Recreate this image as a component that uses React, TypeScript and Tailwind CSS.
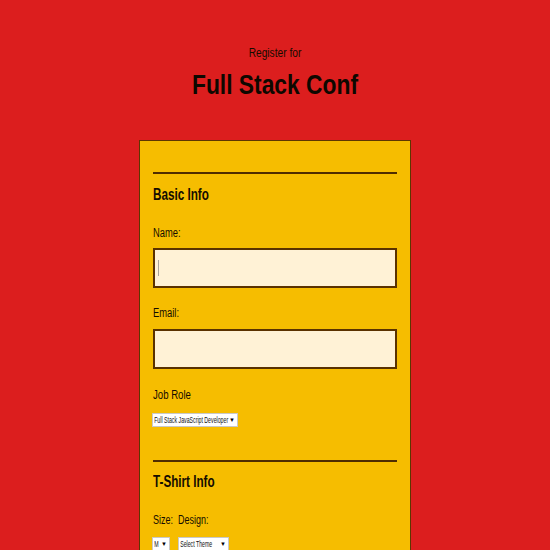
import { useState } from 'react';

const SIZES = ['M', 'S', 'L', 'XL'];

// native selects are drawn as a small white box; the real <select> sits on top, invisible
function MiniSelect({
    value,
    options,
    width,
    onChange,
}: {
    value: string;
    options: string[];
    width: string;
    onChange: (v: string) => void;
}) {
    return (
        <div className={`relative h-[14px] ${width} bg-white border border-[#c9c9c9] overflow-hidden`}>
            <span className="block whitespace-nowrap pl-[2px] text-[9px] leading-[12px] text-[#111] scale-x-[0.58] origin-left">
                {value}
            </span>
            <span className="pointer-events-none absolute right-[2px] top-0 text-[6px] leading-[12px] text-black">▼</span>
            <select
                value={value}
                onChange={(e) => onChange(e.target.value)}
                className="absolute inset-0 opacity-0 cursor-pointer"
            >
                {options.map((o) => (
                    <option key={o} value={o}>{o}</option>
                ))}
            </select>
        </div>
    );
}

export default function App() {
    const [name, setName] = useState('');
    const [email, setEmail] = useState('');
    const [role, setRole] = useState('Full Stack JavaScript Developer');
    const [size, setSize] = useState('M');
    const [design, setDesign] = useState('Select Theme');

    return (
        <div
            className="h-[550px] overflow-hidden bg-[#dc1e1e] text-[#140c00]"
            style={{ fontFamily: '"Liberation Sans", Arial, sans-serif' }}
        >
            {/* Header */}
            <header className="pt-[46px] text-center">
                <p className="text-[12px] leading-[14px] scale-x-[0.85]">Register for</p>
                <h1 className="mt-[9px] text-[28px] leading-[32px] font-bold text-[#0e0800] scale-x-[0.815]">Full Stack Conf</h1>
            </header>

            {/* Form panel */}
            <form className="mx-auto mt-[39px] w-[272px] bg-[#f6bd00] border border-[#5e3600] px-[13px] pt-[31px] pb-10">
                <fieldset>
                    <div className="h-[2px] bg-[#4f2c00]" />
                    <h2 className="mt-[12px] text-[16px] leading-[18px] font-bold origin-left scale-x-[0.73]">Basic Info</h2>

                    <label className="block mt-[22px] text-[12px] leading-[14px] origin-left scale-x-[0.78]">Name:</label>
                    <div className="relative mt-[8px]">
                        <input
                            type="text"
                            value={name}
                            onChange={(e) => setName(e.target.value)}
                            className="block w-full h-[40px] bg-[#fff2d6] border-2 border-[#5a3200] outline-none px-[4px] text-[13px]"
                        />
                        {name === '' && (
                            <span className="pointer-events-none absolute left-[5px] top-[12px] w-px h-[16px] bg-[#a9a397]" />
                        )}
                    </div>

                    <label className="block mt-[18px] text-[12px] leading-[14px] origin-left scale-x-[0.78]">Email:</label>
                    <input
                        type="email"
                        value={email}
                        onChange={(e) => setEmail(e.target.value)}
                        className="block mt-[9px] w-full h-[40px] bg-[#fff2d6] border-2 border-[#5a3200] outline-none px-[4px] text-[13px]"
                    />

                    <label className="block mt-[19px] text-[12px] leading-[14px] origin-left scale-x-[0.8]">Job Role</label>
                    <div className="mt-[11px] -ml-px">
                        <MiniSelect
                            value={role}
                            options={['Full Stack JavaScript Developer', 'Front End Developer', 'Back End Developer', 'Designer', 'Student', 'Other']}
                            width="w-[86px]"
                            onChange={setRole}
                        />
                    </div>
                </fieldset>

                <fieldset>
                    <div className="mt-[33px] h-[2px] bg-[#4f2c00]" />
                    <h2 className="mt-[11px] text-[16px] leading-[18px] font-bold origin-left scale-x-[0.73]">T-Shirt Info</h2>

                    <div className="mt-[22px] flex">
                        <div className="w-[25px]">
                            <label className="block text-[12px] leading-[14px] whitespace-nowrap origin-left scale-x-[0.75]">Size:</label>
                            <div className="mt-[10px] -ml-px">
                                <MiniSelect value={size} options={SIZES} width="w-[18px]" onChange={setSize} />
                            </div>
                        </div>
                        <div>
                            <label className="block text-[12px] leading-[14px] whitespace-nowrap origin-left scale-x-[0.75]">Design:</label>
                            <div className="mt-[10px]">
                                <MiniSelect
                                    value={design}
                                    options={['Select Theme', 'Theme - JS Puns', 'Theme - I ♥ JS']}
                                    width="w-[51px]"
                                    onChange={setDesign}
                                />
                            </div>
                        </div>
                    </div>
                </fieldset>
            </form>
        </div>
    );
}
